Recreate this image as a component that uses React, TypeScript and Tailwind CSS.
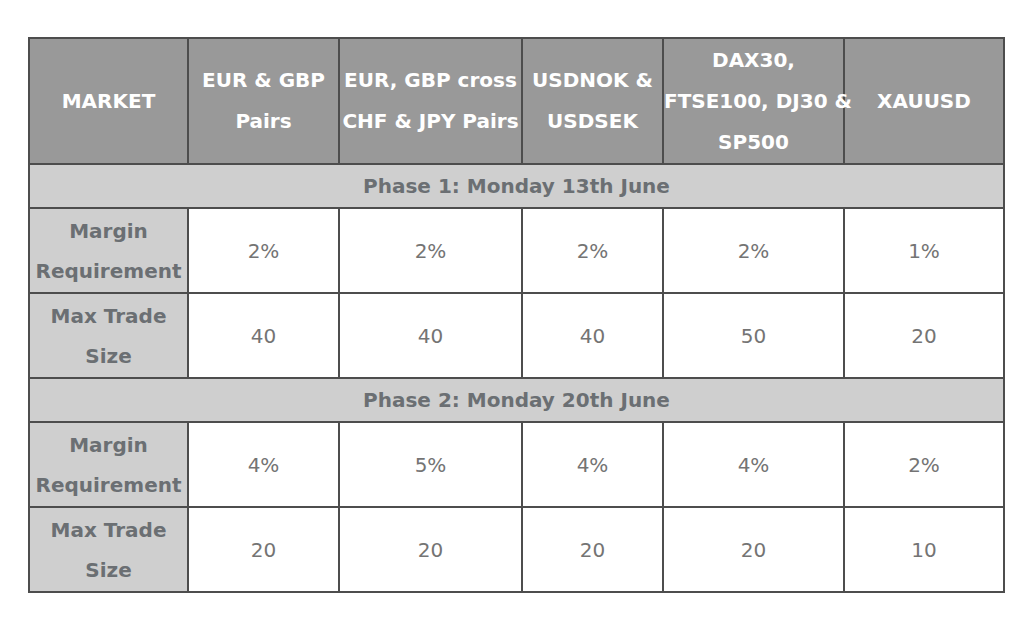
const columns = [
  "EUR & GBP\nPairs",
  "EUR, GBP cross\nCHF & JPY Pairs",
  "USDNOK &\nUSDSEK",
  "DAX30,\nFTSE100, DJ30 &\nSP500",
  "XAUUSD",
];

const phases = [
  {
    title: "Phase 1: Monday 13th June",
    margin: ["2%", "2%", "2%", "2%", "1%"],
    size: ["40", "40", "40", "50", "20"],
  },
  {
    title: "Phase 2: Monday 20th June",
    margin: ["4%", "5%", "4%", "4%", "2%"],
    size: ["20", "20", "20", "20", "10"],
  },
];

const widths = ["w-[159px]", "w-[151px]", "w-[183px]", "w-[141px]", "w-[181px]", "w-[160px]"];

function Label({ lines }: { lines: string[] }) {
  return (
    <td className="border-2 border-[#4d4d4d] bg-[#cfcfcf] text-center font-bold text-[#6b6f73] leading-[40px] p-0">
      {lines.map((l) => (
        <div key={l}>{l}</div>
      ))}
    </td>
  );
}

export default function App() {
  return (
    <div
      className="min-h-screen bg-white pt-[37px] pl-[28px]"
      style={{ fontFamily: '"DejaVu Sans", sans-serif' }}
    >
      <table className="border-collapse table-fixed w-[975px] text-[20px] border-2 border-[#4d4d4d]">
        <colgroup>
          {widths.map((w) => (
            <col key={w} className={w} />
          ))}
        </colgroup>
        <thead>
          {/* Header row */}
          <tr className="h-[126px] bg-[#999999]">
            <th className="border-2 border-[#4d4d4d] text-white font-bold p-0">MARKET</th>
            {columns.map((c) => (
              <th
                key={c}
                className="border-2 border-[#4d4d4d] text-white font-bold leading-[41px] p-0 whitespace-nowrap"
              >
                {c.split("\n").map((l) => (
                  <div key={l}>{l}</div>
                ))}
              </th>
            ))}
          </tr>
        </thead>
        {phases.map((phase) => (
          <tbody key={phase.title}>
            <tr className="h-[44px] bg-[#cfcfcf]">
              <td
                colSpan={6}
                className="border-2 border-[#4d4d4d] text-center font-bold text-[#6b6f73] p-0"
              >
                {phase.title}
              </td>
            </tr>
            <tr className="h-[85px]">
              <Label lines={["Margin", "Requirement"]} />
              {phase.margin.map((v, i) => (
                <td
                  key={i}
                  className="border-2 border-[#4d4d4d] bg-white text-center text-[#747474] p-0"
                >
                  {v}
                </td>
              ))}
            </tr>
            <tr className="h-[85px]">
              <Label lines={["Max Trade", "Size"]} />
              {phase.size.map((v, i) => (
                <td
                  key={i}
                  className="border-2 border-[#4d4d4d] bg-white text-center text-[#747474] p-0"
                >
                  {v}
                </td>
              ))}
            </tr>
          </tbody>
        ))}
      </table>
    </div>
  );
}
